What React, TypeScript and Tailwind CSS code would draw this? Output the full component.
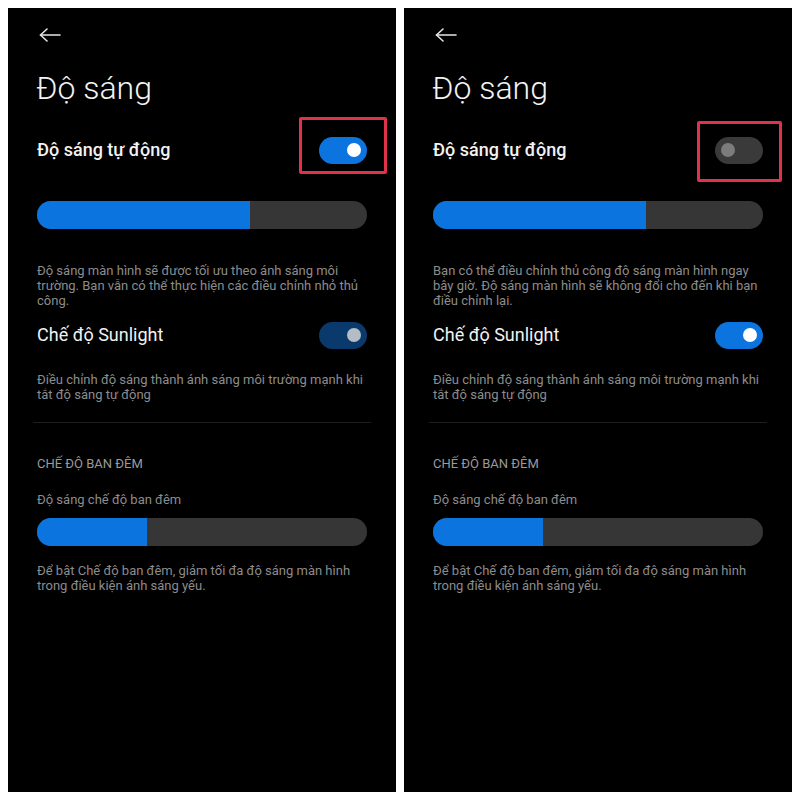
import React from "react";

type PanelProps = {
  autoOn: boolean;
  autoDesc: string;
  sunlight: "dim" | "on";
  box: string;
};

function Toggle({ state }: { state: "on" | "off" | "dim" }) {
  const track =
    state === "on" ? "bg-[#0b74de] justify-end" : state === "dim" ? "bg-[#0a3a6c] justify-end" : "bg-[#3a3a3a] justify-start";
  const knob = state === "on" ? "bg-white" : state === "dim" ? "bg-[#b4bcc6]" : "bg-[#7c7c7c]";
  return (
    <div className={`w-[48px] h-[27px] rounded-full flex items-center px-[6px] ${track}`}>
      <div className={`w-[14px] h-[14px] rounded-full ${knob}`}></div>
    </div>
  );
}

function Slider({ fill }: { fill: string }) {
  return (
    <div className="h-[28px] w-full rounded-full bg-[#363636] overflow-hidden flex">
      <div className={`h-full bg-[#0b74de] ${fill}`}></div>
    </div>
  );
}

function Panel({ autoOn, autoDesc, sunlight, box }: PanelProps) {
  return (
    <div className="relative w-[388px] h-[784px] bg-black px-[29px] flex flex-col">
      {/* back arrow */}
      <div className="mt-[20px] h-[14px] ml-[2px]">
        <svg width="22" height="14" viewBox="0 0 22 14" fill="none" stroke="#e6e6e6" strokeWidth="1.6" strokeLinecap="round" strokeLinejoin="round">
          <path d="M1.5 7H21" />
          <path d="M8 1L1.5 7L8 13" />
        </svg>
      </div>

      <h1 className="mt-[26px] text-[32px] leading-[40px] font-light text-[#f2f2f2] -ml-[1px]">Độ sáng</h1>

      <div className="mt-[28px] h-[28px] flex items-center justify-between">
        <span className="text-[18px] leading-[24px] font-medium text-[#f2f2f2]">Độ sáng tự động</span>
        <Toggle state={autoOn ? "on" : "off"} />
      </div>

      <div className="mt-[37px]">
        <Slider fill="w-[213px]" />
      </div>

      <p className="mt-[34px] text-[13px] leading-[15px] text-[#8c8c8c]">{autoDesc}</p>

      <div className="mt-[13px] h-[28px] flex items-center justify-between">
        <span className="text-[18px] leading-[24px] text-[#f2f2f2]">Chế độ Sunlight</span>
        <Toggle state={sunlight} />
      </div>

      <p className="mt-[23px] text-[13px] leading-[15px] text-[#8c8c8c]">
        Điều chỉnh độ sáng thành ánh sáng môi trường mạnh khi tắt độ sáng tự động
      </p>

      <div className="mt-[20px] h-px bg-[#1e1e1e] -mx-[4px]"></div>

      <p className="mt-[33px] text-[13px] leading-[15px] text-[#9a9a9a]">CHẾ ĐỘ BAN ĐÊM</p>

      <p className="mt-[21px] text-[13px] leading-[15px] text-[#8c8c8c]">Độ sáng chế độ ban đêm</p>

      <div className="mt-[11px]">
        <Slider fill="w-[110px]" />
      </div>

      <p className="mt-[17px] text-[13px] leading-[15px] text-[#8c8c8c]">
        Để bật Chế độ ban đêm, giảm tối đa độ sáng màn hình trong điều kiện ánh sáng yếu.
      </p>

      {/* highlight box */}
      <div className={`absolute border-[3px] border-[#e0324a] rounded-[2px] ${box}`}></div>
    </div>
  );
}

export default function App() {
  return (
    <div className="min-h-screen bg-white p-[8px] flex gap-[8px]" style={{ fontFamily: "Roboto, 'Noto Sans', sans-serif" }}>
      <Panel
        autoOn={true}
        autoDesc="Độ sáng màn hình sẽ được tối ưu theo ánh sáng môi trường. Bạn vẫn có thể thực hiện các điều chỉnh nhỏ thủ công."
        sunlight="dim"
        box="left-[291px] top-[109px] w-[88px] h-[57px]"
      />
      <Panel
        autoOn={false}
        autoDesc="Bạn có thể điều chỉnh thủ công độ sáng màn hình ngay bây giờ. Độ sáng màn hình sẽ không đổi cho đến khi bạn điều chỉnh lại."
        sunlight="on"
        box="left-[293px] top-[113px] w-[85px] h-[61px]"
      />
    </div>
  );
}
